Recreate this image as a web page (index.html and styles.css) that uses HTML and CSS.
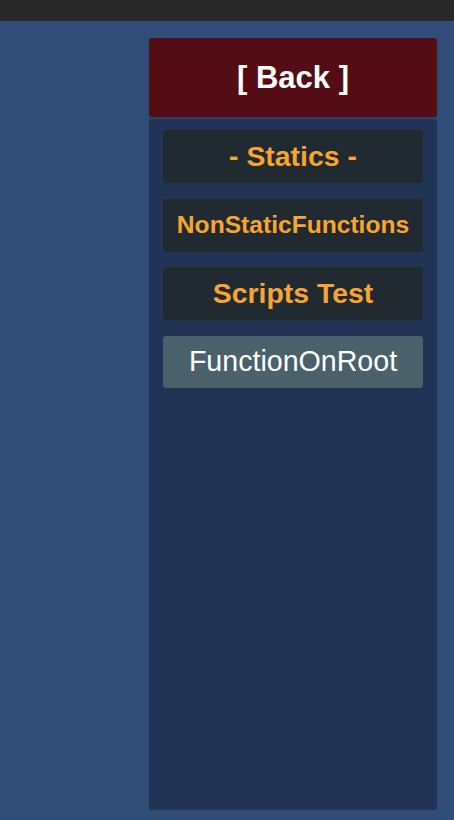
FILE: index.html
```html
<!DOCTYPE html>
<html>
<head>
<meta charset="utf-8">
<link rel="stylesheet" href="styles.css">
</head>
<body>
<div class="topbar"></div>
<div class="stage">
  <div class="panel">
    <div class="back">[ Back ]</div>
    <div class="list">
      <div class="item label">- Statics -</div>
      <div class="item label small">NonStaticFunctions</div>
      <div class="item label">Scripts Test</div>
      <div class="item func">FunctionOnRoot</div>
    </div>
  </div>
</div>
</body>
</html>
```
FILE: styles.css
```css
html, body {
  margin: 0;
  padding: 0;
  height: 820px;
  overflow: hidden;
}
body {
  display: flex;
  flex-direction: column;
  background: #2f4d77;
  font-family: "Liberation Sans", Arial, sans-serif;
}
.topbar {
  height: 21px;
  flex: none;
  background: #282828;
}
.stage {
  flex: 1;
  display: flex;
  justify-content: flex-end;
  padding: 17px 17px 11px 0;
  min-height: 0;
}
.panel {
  width: 288px;
  display: flex;
  flex-direction: column;
  gap: 2px;
}
.back {
  height: 79px;
  flex: none;
  background: #550d15;
  border-radius: 3px;
  color: #ffffff;
  font-weight: bold;
  font-size: 31px;
  display: flex;
  align-items: center;
  justify-content: center;
  box-shadow: 0 1px 1px rgba(0,0,0,0.25);
}
.list {
  flex: 1;
  background: #213455;
  border-radius: 3px;
  padding: 11px 14px;
  display: flex;
  flex-direction: column;
  gap: 15.5px;
  box-shadow: 0 1px 1px rgba(0,0,0,0.3);
}
.item {
  height: 53px;
  flex: none;
  border-radius: 3px;
  display: flex;
  align-items: center;
  justify-content: center;
  font-size: 28.4px;
  white-space: nowrap;
}
.label {
  background: #212a31;
  color: #f6a530;
  font-weight: bold;
}
.label.small {
  font-size: 24.6px;
}
.func {
  background: #4a606b;
  color: #ffffff;
  height: 52px;
  font-size: 28.6px;
}
```
